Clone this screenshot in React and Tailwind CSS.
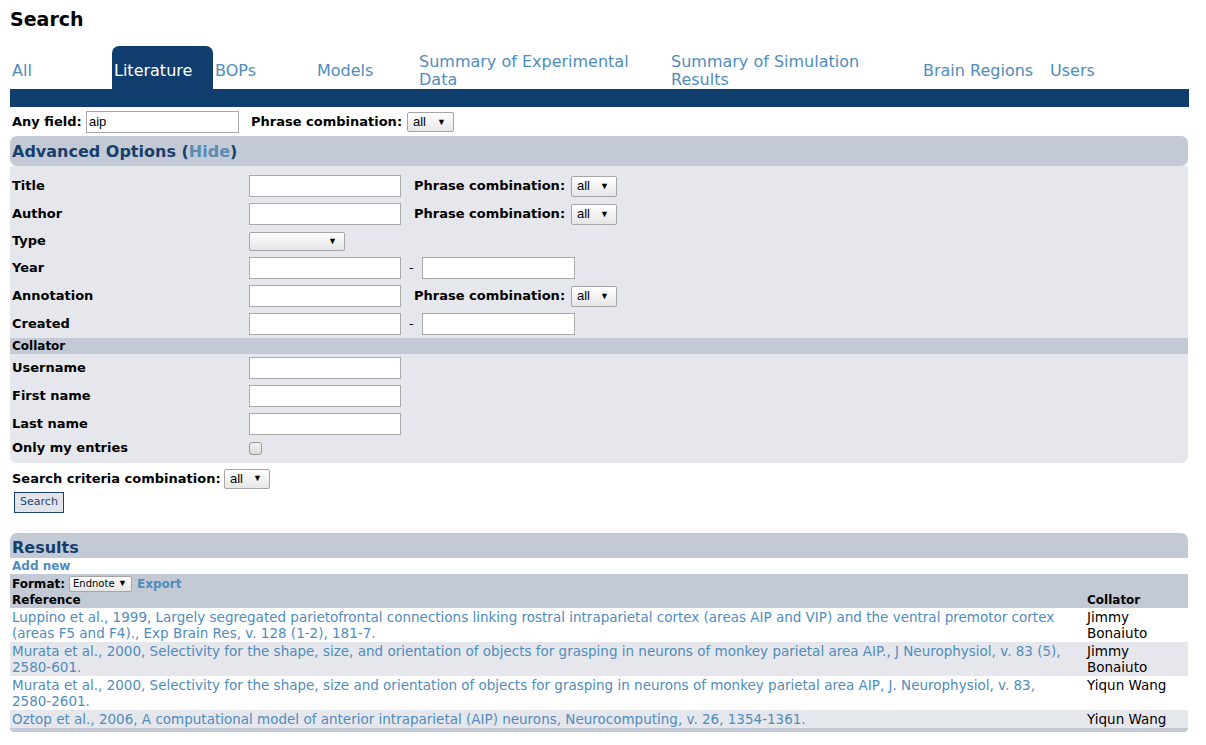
import React from "react";

function Sel({ className, text, small }) {
  return (
    <div
      className={
        "flex items-center justify-between border border-[#a6a6a6] rounded-[2px] bg-gradient-to-b from-[#ffffff] to-[#e6e6e6] text-black font-['Liberation_Sans',Arial,sans-serif] " +
        className
      }
    >
      <span className={small ? "pl-[3px] text-[10px] font-['DejaVu_Sans',sans-serif]" : "pl-[5px] text-[13px]"}>{text}</span>
      <span className={small ? "pr-[4px] text-[9px] leading-none" : "pr-[7px] text-[9px] leading-none"}>▼</span>
    </div>
  );
}

function Inp({ className, value }) {
  return (
    <div
      className={
        "flex items-center bg-white border border-[#a9a9a9] h-[22px] pl-[2px] text-[13px] text-black font-['Liberation_Sans',Arial,sans-serif] " +
        (className || "w-[152px]")
      }
    >
      {value}
    </div>
  );
}

function Row({ label, children, h }) {
  return (
    <div className={"flex items-center " + (h || "h-[28px]")}>
      <div className="w-[239px] pl-[2px] font-bold whitespace-nowrap">{label}</div>
      <div className="flex items-center">{children}</div>
    </div>
  );
}

function Phrase() {
  return (
    <>
      <span className="ml-[13px] w-[157px] font-bold whitespace-nowrap">Phrase combination:</span>
      <Sel className="w-[46px] h-[21px]" text="all" />
    </>
  );
}

function Range() {
  return (
    <>
      <Inp />
      <span className="w-[21px] pl-[8px]">-</span>
      <Inp className="w-[153px]" />
    </>
  );
}

const tabs = [
  { t: "All", w: "w-[102px]" },
  { t: "Literature", w: "w-[101px]", active: true },
  { t: "BOPs", w: "w-[102px]" },
  { t: "Models", w: "w-[102px]" },
  { t: "Summary of Experimental Data", w: "w-[252px]" },
  { t: "Summary of Simulation Results", w: "w-[252px]" },
  { t: "Brain Regions", w: "w-[127px]" },
  { t: "Users", w: "w-[100px]" },
];

const refs = [
  {
    r: "Luppino et al., 1999, Largely segregated parietofrontal connections linking rostral intraparietal cortex (areas AIP and VIP) and the ventral premotor cortex (areas F5 and F4)., Exp Brain Res, v. 128 (1-2), 181-7.",
    c: "Jimmy Bonaiuto",
  },
  {
    r: "Murata et al., 2000, Selectivity for the shape, size, and orientation of objects for grasping in neurons of monkey parietal area AIP., J Neurophysiol, v. 83 (5), ",
    tail: "2580-601.",
    c: "Jimmy Bonaiuto",
  },
  {
    r: "Murata et al., 2000, Selectivity for the shape, size and orientation of objects for grasping in neurons of monkey parietal area AIP, J. Neurophysiol, v. 83, ",
    tail: "2580-2601.",
    c: "Yiqun Wang",
  },
  {
    r: "Oztop et al., 2006, A computational model of anterior intraparietal (AIP) neurons, Neurocomputing, v. 26, 1354-1361.",
    c: "Yiqun Wang",
  },
];

export default function App() {
  return (
    <div className="w-[1206px] min-h-[745px] bg-white font-['DejaVu_Sans',Verdana,sans-serif] text-[13px] text-black">
      <div className="w-[1189px] pl-[10px]">
        <h1 className="pt-[8px] text-[19px] leading-[22px] font-bold">Search</h1>

        {/* tabs */}
        <div className="mt-[16px] flex h-[43px]">
          {tabs.map((tab) => (
            <div
              key={tab.t}
              className={
                "flex items-center pl-[2px] pt-[6px] text-[16px] leading-[18px] " +
                tab.w +
                (tab.active ? " bg-[#0f3d6e] text-white rounded-t-[7px]" : " text-[#4f8cbd]")
              }
            >
              <span>{tab.t}</span>
            </div>
          ))}
        </div>
        <div className="h-[18px] bg-[#0f3d6e]" />

        {/* any field */}
        <div className="mt-[4px] flex items-center h-[22px]">
          <span className="pl-[2px] w-[76px] font-bold whitespace-nowrap">Any field:</span>
          <Inp className="w-[153px]" value="aip" />
          <span className="ml-[12px] w-[156px] font-bold whitespace-nowrap">Phrase combination:</span>
          <Sel className="w-[47px] h-[20px]" text="all" />
        </div>

        {/* advanced */}
        <div className="mt-[3px] mr-[1px]">
          <div className="h-[30px] flex items-center pt-[1px] bg-[#c3cad5] rounded-[7px] pl-[2px] text-[16px] font-bold text-[#173f6d]">
            Advanced Options (<span className="text-[#5a8bb6]">Hide</span>)
          </div>
          <div className="bg-[#e6e7ec] rounded-b-[7px] rounded-t-[2px] pt-[6px] pb-[5px]">
            <Row label="Title">
              <Inp />
              <Phrase />
            </Row>
            <Row label="Author">
              <Inp />
              <Phrase />
            </Row>
            <Row label="Type" h="h-[26px]">
              <Sel className="w-[96px] h-[19px]" text="" />
            </Row>
            <Row label="Year">
              <Range />
            </Row>
            <Row label="Annotation">
              <Inp />
              <Phrase />
            </Row>
            <Row label="Created">
              <Range />
            </Row>
            <div className="h-[16px] flex items-center bg-[#c3cad5] pl-[2px] text-[12px] font-bold">Collator</div>
            <Row label="Username">
              <Inp />
            </Row>
            <Row label="First name">
              <Inp />
            </Row>
            <Row label="Last name">
              <Inp />
            </Row>
            <Row label="Only my entries" h="h-[20px]">
              <div className="w-[13px] h-[13px] rounded-[3px] border border-[#9a9a9a] bg-gradient-to-b from-[#f2f2f2] to-[#dcdcdc]" />
            </Row>
          </div>
        </div>

        <div className="mt-[5px] flex items-center h-[21px]">
          <span className="pl-[2px] w-[214px] font-bold whitespace-nowrap">Search criteria combination:</span>
          <Sel className="w-[46px] h-[20px]" text="all" />
        </div>
        <div className="mt-[3px] ml-[4px] w-[50px] h-[21px] flex items-center justify-center border border-[#1c3f6e] bg-[#e2e4e8] text-[11px] text-[#23497a]">
          Search
        </div>

        {/* results */}
        <div className="mt-[20px] mr-[1px]">
          <div className="h-[25px] flex items-end bg-[#c3cad5] rounded-t-[7px] pl-[2px] text-[16px] leading-[20px] font-bold text-[#173f6d]">
            Results
          </div>
          <div className="h-[16px] flex items-center pl-[2px] text-[12px] font-bold text-[#4f8cbd]">Add new</div>
          <div className="bg-[#c3cad5] pt-[1px] text-[12px]">
            <div className="h-[17px] flex items-center pl-[2px]">
              <span className="font-bold mr-[4px]">Format:</span>
              <Sel className="w-[63px] h-[16px]" text="Endnote" small />
              <span className="ml-[5px] font-bold text-[#4f8cbd]">Export</span>
            </div>
            <div className="grid grid-cols-[1075px_103px] h-[16px] items-end font-bold leading-[16px]">
              <div className="pl-[2px]">Reference</div>
              <div className="pl-[2px]">Collator</div>
            </div>
          </div>
          <div className="bg-[#c3cad5] pb-[4px] rounded-b-[4px]">
            {refs.map((x, i) => (
              <div
                key={i}
                className={
                  "grid grid-cols-[1075px_103px] py-[1px] text-[13.5px] leading-[16px] " +
                  (i % 2 === 0 ? "bg-white" : "bg-[#e6e7ec]")
                }
              >
                <div className="pl-[2px] pr-[2px] text-[#4f8cbd]">
                  {x.r}
                  {x.tail ? <span className="whitespace-nowrap">{x.tail}</span> : null}
                </div>
                <div className="pl-[2px] pr-[2px]">{x.c}</div>
              </div>
            ))}
          </div>
        </div>
      </div>
    </div>
  );
}
